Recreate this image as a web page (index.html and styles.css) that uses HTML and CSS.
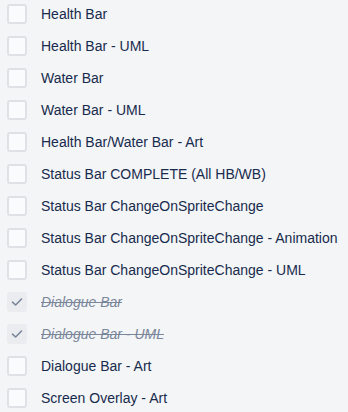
FILE: index.html
```html
<!DOCTYPE html>
<html lang="en">
<head>
  <meta charset="UTF-8">
  <link rel="stylesheet" href="styles.css">
  <title>Checklist</title>
</head>
<body>
  <ul class="checklist">
    <li class="item"><span class="box"></span><span class="label">Health Bar</span></li>
    <li class="item"><span class="box"></span><span class="label">Health Bar - UML</span></li>
    <li class="item"><span class="box"></span><span class="label">Water Bar</span></li>
    <li class="item"><span class="box"></span><span class="label">Water Bar - UML</span></li>
    <li class="item"><span class="box"></span><span class="label">Health Bar/Water Bar - Art</span></li>
    <li class="item"><span class="box"></span><span class="label">Status Bar COMPLETE (All HB/WB)</span></li>
    <li class="item"><span class="box"></span><span class="label">Status Bar ChangeOnSpriteChange</span></li>
    <li class="item"><span class="box"></span><span class="label">Status Bar ChangeOnSpriteChange - Animation</span></li>
    <li class="item"><span class="box"></span><span class="label">Status Bar ChangeOnSpriteChange - UML</span></li>
    <li class="item done"><span class="box"><svg width="12" height="10" viewBox="0 0 12 10"><path d="M1.5 5.2 L4.6 8 L10.5 2" fill="none" stroke="#7a869a" stroke-width="1.6" stroke-linecap="round" stroke-linejoin="round"/></svg></span><span class="label">Dialogue Bar</span></li>
    <li class="item done"><span class="box"><svg width="12" height="10" viewBox="0 0 12 10"><path d="M1.5 5.2 L4.6 8 L10.5 2" fill="none" stroke="#7a869a" stroke-width="1.6" stroke-linecap="round" stroke-linejoin="round"/></svg></span><span class="label">Dialogue Bar - UML</span></li>
    <li class="item"><span class="box"></span><span class="label">Dialogue Bar - Art</span></li>
    <li class="item"><span class="box"></span><span class="label">Screen Overlay - Art</span></li>
  </ul>
</body>
</html>
```

FILE: styles.css
```css
body {
  margin: 0;
  background-color: #f4f5f7;
  font-family: "Liberation Sans", Arial, sans-serif;
  color: #172b4d;
}
.checklist {
  list-style: none;
  margin: -2px 0 0 0;
  padding: 0 0 0 7px;
}
.item {
  display: flex;
  align-items: center;
  height: 32px;
}
.box {
  width: 20px;
  height: 20px;
  box-sizing: border-box;
  border: 2px solid #dfe1e6;
  border-radius: 3px;
  background-color: #fafbfc;
  display: flex;
  align-items: center;
  justify-content: center;
  flex-shrink: 0;
}
.label {
  margin-left: 14px;
  font-size: 14px;
  white-space: nowrap;
}
.done .box {
  border-color: #ebecf0;
  background-color: #ebecf0;
}
.done .label {
  font-style: italic;
  text-decoration: line-through;
  color: #7a869a;
}
```
